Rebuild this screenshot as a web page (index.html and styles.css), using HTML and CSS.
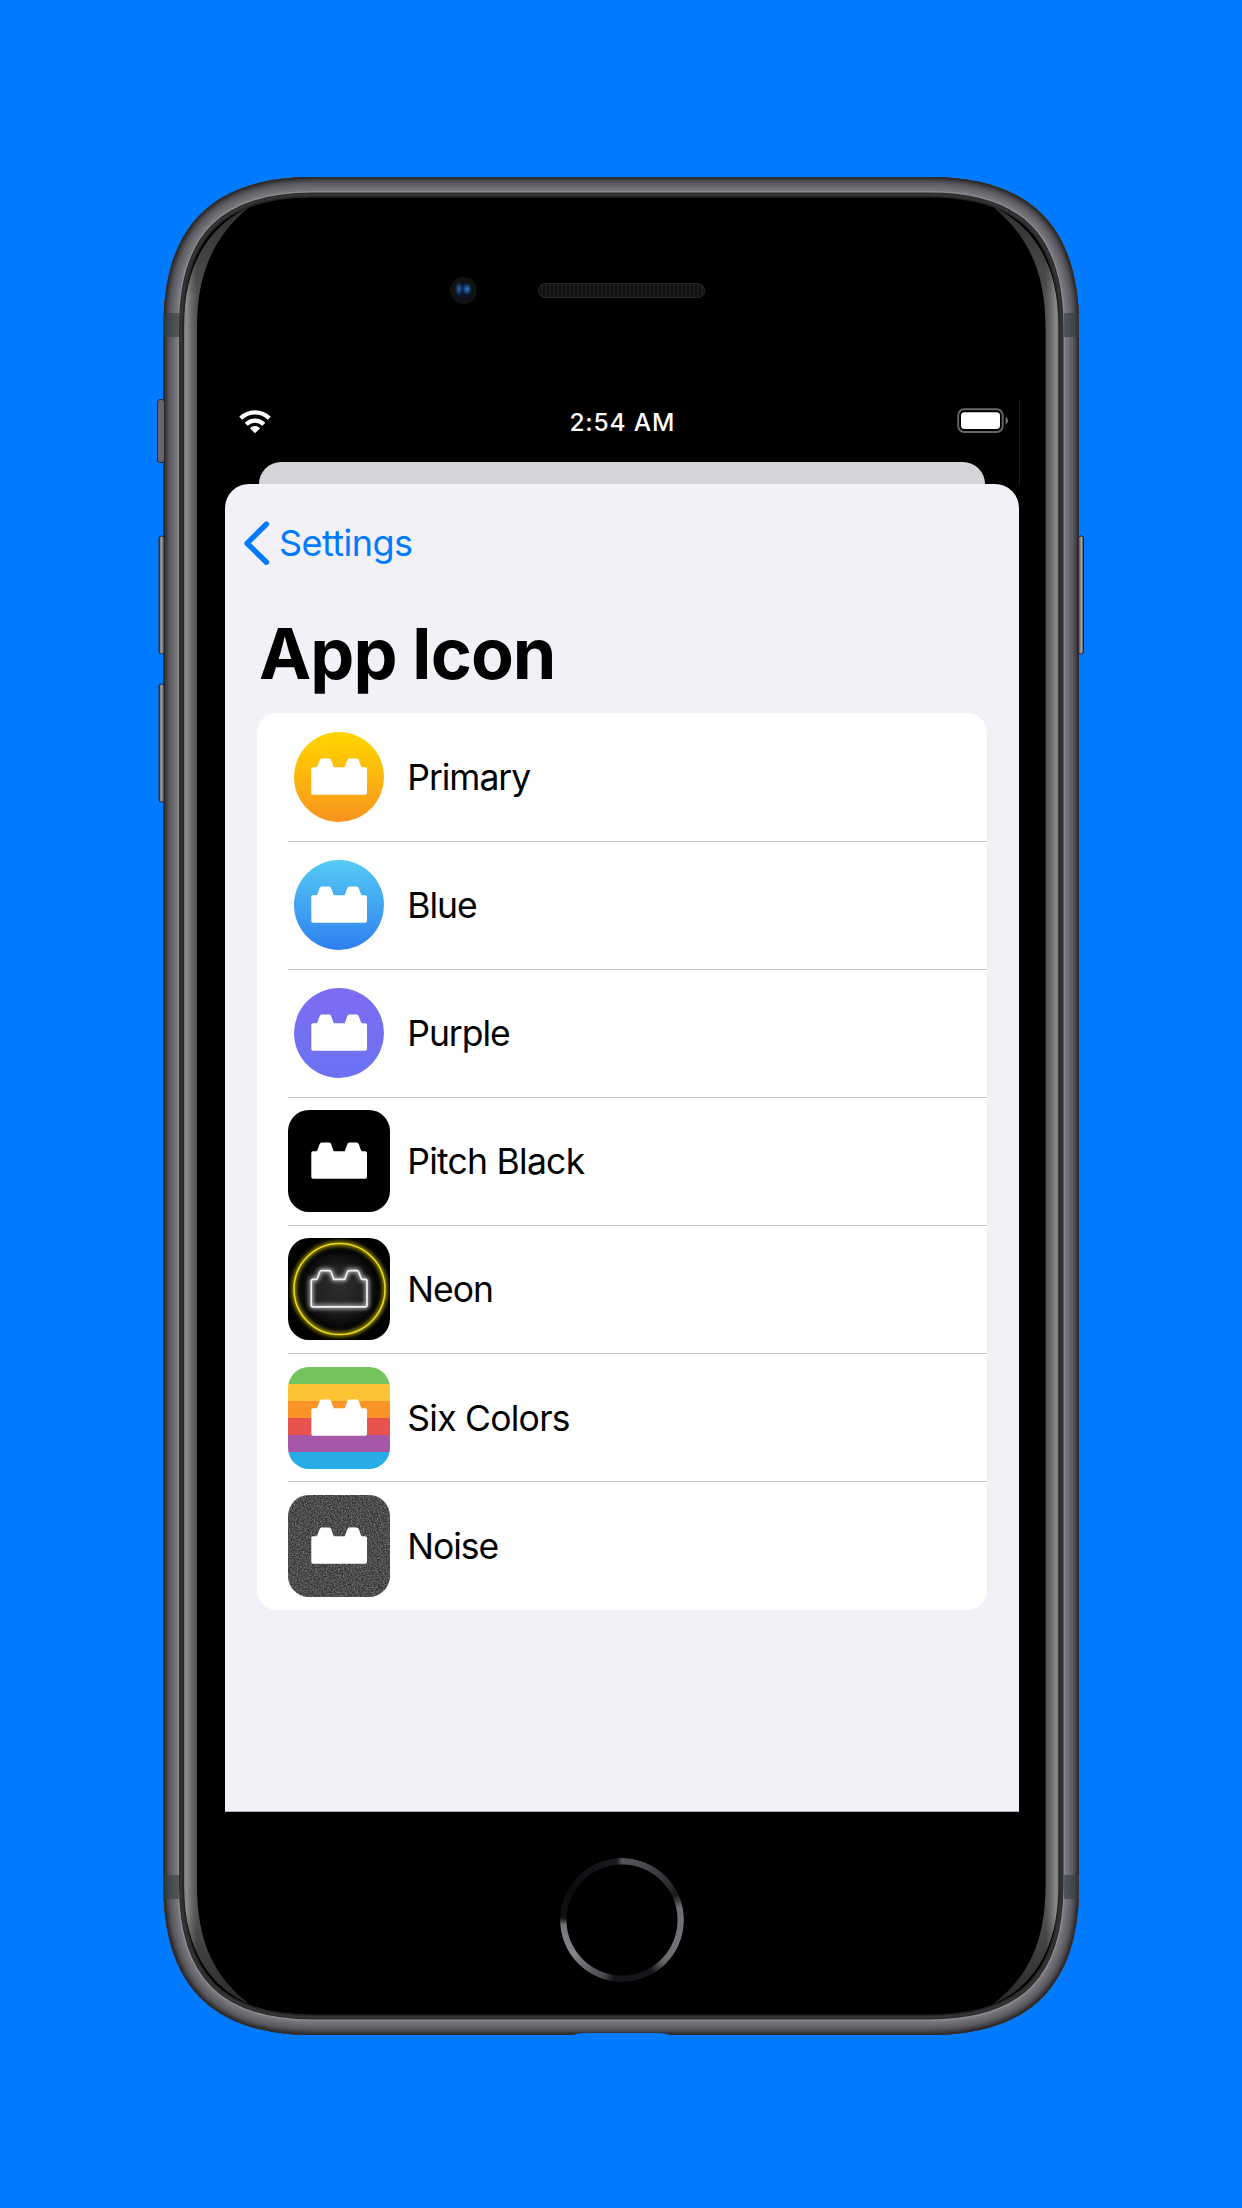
FILE: index.html
```html
<!DOCTYPE html>
<html lang="en">
<head>
<meta charset="utf-8">
<title>App Icon</title>
<link rel="stylesheet" href="styles.css">
</head>
<body>
<svg class="frame" width="1242" height="2208" viewBox="0 0 1242 2208" aria-hidden="true">
  <defs>
    <path id="body" d="M313.500 177H929C1030 177 1079 226 1079 327V1885C1079 1986 1030 2035 929 2035H313.500C212.500 2035 163.500 1986 163.500 1885V327C163.500 226 212.500 177 313.500 177Z"/>
    <clipPath id="bodyClip"><use href="#body"/></clipPath>
    <linearGradient id="shine" gradientUnits="userSpaceOnUse" x1="184" y1="0" x2="197" y2="0">
      <stop offset="0" stop-color="#777"/><stop offset=".2" stop-color="#8b8b8b"/><stop offset=".6" stop-color="#686868"/><stop offset="1" stop-color="#505050"/>
    </linearGradient>
    <linearGradient id="fade" x1="0" y1="0" x2="0" y2="1">
      <stop offset="0" stop-opacity=".4"/><stop offset=".05" stop-opacity="0"/><stop offset=".95" stop-opacity="0"/><stop offset="1" stop-opacity=".5"/>
    </linearGradient>
    <path id="edge" d="M249 207C213 225 184 258 184 327V1885C184 1954 213 1988 249 2004C216 1978 197 1945 197 1885V327C197 268 217 234 249 207Z"/>
    <linearGradient id="key" x1="0" y1="0" x2="1" y2="0">
      <stop offset="0" stop-color="#2c2b2e"/><stop offset=".4" stop-color="#aaa9ad"/><stop offset=".65" stop-color="#77757b"/><stop offset="1" stop-color="#333236"/>
    </linearGradient>
    <linearGradient id="keyR" x1="1" y1="0" x2="0" y2="0">
      <stop offset="0" stop-color="#2c2b2e"/><stop offset=".35" stop-color="#aaa9ad"/><stop offset=".65" stop-color="#77757b"/><stop offset="1" stop-color="#333236"/>
    </linearGradient>
  </defs>
  <use href="#body" fill="#000"/>
  <g clip-path="url(#bodyClip)" fill="none">
    <use href="#body" stroke="#252525" stroke-width="41"/>
    <use href="#body" stroke="#323333" stroke-width="38"/>
    <use href="#body" stroke="#2b2b2c" stroke-width="33"/>
    <use href="#body" stroke="#8b8a8f" stroke-width="31"/>
    <use href="#body" stroke="#77757c" stroke-width="28"/>
    <use href="#body" stroke="#706e75" stroke-width="24"/>
    <use href="#body" stroke="#67656c" stroke-width="20"/>
    <use href="#body" stroke="#5f5d64" stroke-width="16"/>
    <use href="#body" stroke="#545258" stroke-width="12"/>
    <use href="#body" stroke="#47464b" stroke-width="9"/>
    <use href="#body" stroke="#38373b" stroke-width="6"/>
    <use href="#body" stroke="#2b2a2e" stroke-width="3"/>
  </g>
  <g fill="#343d40" fill-opacity=".62">
    <path d="M164 313h15v24h-15zM1064 313h15v24h-15zM164 1875h15v24h-15zM1064 1875h15v24h-15z"/>
  </g>
  <g id="edgeL"><use href="#edge" fill="url(#shine)"/><use href="#edge" fill="url(#fade)"/></g>
  <use href="#edgeL" transform="matrix(-1 0 0 1 1242.500 0)"/>
  <g stroke="#252427">
    <rect x="157.500" y="399.500" width="7" height="63" rx="2.500" fill="#68666c"/>
    <rect x="159" y="536" width="5.500" height="118" rx="2.500" fill="url(#key)"/>
    <rect x="159" y="684" width="5.500" height="118" rx="2.500" fill="url(#key)"/>
    <rect x="1078" y="536" width="5.500" height="118" rx="2.500" fill="url(#keyR)"/>
  </g>
  <path d="M573 2035q5-2 12-2h73q7 0 12 2z" fill="#007aff"/>
  <path d="M1019.500 399v86" stroke="#1c1d20"/>
</svg>

<svg class="defs" width="0" height="0" aria-hidden="true">
  <defs>
    <path id="brick" d="M24.800 41.300H28.200Q29 41.300 29.300 40.500L31.600 34.200Q32.200 32.600 33.900 32.600H41.200Q42.700 32.600 43.200 34.200L45.700 41.300H56.700L59.300 34.200Q59.800 32.600 61.400 32.600H68.700Q70.200 32.600 70.800 34.200L73.100 40.500Q73.400 41.300 74.200 41.300H77.300Q79 41.300 79 43V67Q79 68.800 77.300 68.800H25Q23.300 68.800 23.300 67V43Q23.300 41.300 24.800 41.300Z"/>
    <linearGradient id="gold" x1="0" y1="0" x2="0" y2="1"><stop offset="0" stop-color="#ffd400"/><stop offset=".15" stop-color="#ffce02"/><stop offset="1" stop-color="#f8931f"/></linearGradient>
    <linearGradient id="blue" x1="0" y1="0" x2="0" y2="1"><stop offset="0" stop-color="#55cbf3"/><stop offset="1" stop-color="#2f7ff0"/></linearGradient>
    <linearGradient id="purple" x1="0" y1="0" x2="0" y2="1"><stop offset="0" stop-color="#7d6cf1"/><stop offset="1" stop-color="#6a73f2"/></linearGradient>
    <radialGradient id="haze"><stop offset="0" stop-color="#2c2c2c"/><stop offset=".5" stop-color="#222"/><stop offset="1" stop-color="#000"/></radialGradient>
    <filter id="glow" x="-30%" y="-30%" width="160%" height="160%"><feGaussianBlur stdDeviation="2"/></filter>
    <filter id="grain" x="0" y="0" width="100%" height="100%" color-interpolation-filters="sRGB">
      <feTurbulence type="fractalNoise" baseFrequency=".65" numOctaves="3" seed="4"/>
      <feColorMatrix values=".5 0 0 0 .05  .5 0 0 0 .05  .5 0 0 0 .05  0 0 0 0 1"/>
      <feComposite in2="SourceGraphic" operator="in"/>
    </filter>
  </defs>
</svg>

<main class="phone">
  <header class="bezel-top">
    <span class="camera"></span>
    <span class="speaker"></span>
  </header>

  <section class="screen">
    <div class="status">
      <svg class="wifi" width="32" height="24" viewBox="0 0 32 24"><g fill="none" stroke="#fff" stroke-width="4.300"><path d="M1.700 8.300a20.300 20.300 0 0 1 28.600 0"/><path d="M7.200 14.200a12.500 12.500 0 0 1 17.600 0"/></g><path d="M10.900 18.200a7.300 7.300 0 0 1 10.200 0L16 23.300z" fill="#fff"/></svg>
      <span class="time">2:54 AM</span>
      <svg class="battery" width="52" height="26" viewBox="0 0 52 26"><rect x="1.200" y="1.200" width="44.500" height="22.800" rx="6" fill="none" stroke="#666" stroke-width="1.900"/><rect x="4" y="4.200" width="39" height="16.800" rx="3.500" fill="#fff"/><path d="M48.700 9q2.300 1.200 2.300 3.700t-2.300 3.700z" fill="#777"/></svg>
    </div>
    <div class="sheet-back"></div>
    <div class="sheet">
      <nav class="back">
        <svg width="28" height="46" viewBox="0 0 28 46"><path d="M23.400 4.200L4 23.300l19.400 18.900" fill="none" stroke="#007aff" stroke-width="5.400" stroke-linecap="round" stroke-linejoin="round"/></svg>
        <span class="back-label">Settings</span>
      </nav>
      <h1 class="title">App Icon</h1>
      <ul class="list">
        <li class="row"><svg class="icon" viewBox="0 0 102 102"><circle cx="51" cy="51" r="45" fill="url(#gold)"/><use href="#brick" fill="#fff"/></svg><span class="label">Primary</span></li>
        <li class="row"><svg class="icon" viewBox="0 0 102 102"><circle cx="51" cy="51" r="45" fill="url(#blue)"/><use href="#brick" fill="#fff"/></svg><span class="label">Blue</span></li>
        <li class="row"><svg class="icon" viewBox="0 0 102 102"><circle cx="51" cy="51" r="45" fill="url(#purple)"/><use href="#brick" fill="#fff"/></svg><span class="label">Purple</span></li>
        <li class="row"><svg class="icon tile" viewBox="0 0 102 102"><rect width="102" height="102"/><use href="#brick" fill="#fff"/></svg><span class="label long">Pitch Black</span></li>
        <li class="row"><svg class="icon tile" viewBox="0 0 102 102"><rect width="102" height="102"/><circle cx="51" cy="51" r="42" fill="url(#haze)"/><circle cx="51.500" cy="51" r="45.500" fill="none" stroke="#b5a800" stroke-width="4" filter="url(#glow)"/><circle cx="51.500" cy="51" r="45.500" fill="none" stroke="#efdd1a" stroke-width="1.500"/><use href="#brick" fill="none" stroke="#bbb" stroke-width="4" filter="url(#glow)"/><use href="#brick" fill="none" stroke="#f2f2f2" stroke-width="1.700"/></svg><span class="label">Neon</span></li>
        <li class="row"><svg class="icon tile" viewBox="0 0 102 102"><rect width="102" height="17" fill="#74c45e"/><rect y="17" width="102" height="17" fill="#fec334"/><rect y="34" width="102" height="17" fill="#fb9427"/><rect y="51" width="102" height="17" fill="#e8534f"/><rect y="68" width="102" height="17" fill="#a657a8"/><rect y="85" width="102" height="17" fill="#27ace5"/><use href="#brick" fill="#fff"/></svg><span class="label long">Six Colors</span></li>
        <li class="row"><svg class="icon tile" viewBox="0 0 102 102"><rect width="102" height="102" fill="#494949" filter="url(#grain)"/><use href="#brick" fill="#fff"/></svg><span class="label">Noise</span></li>
      </ul>
    </div>
  </section>

  <footer class="bezel-bottom"><span class="home"></span></footer>
</main>
</body>
</html>
```
FILE: styles.css
```css
* { box-sizing: border-box; }

body {
  margin: 0;
  width: 1242px;
  height: 2208px;
  overflow: hidden;
  background: #007aff;
  font-family: Inter, "Liberation Sans", sans-serif;
  color: #000;
}

.frame { position: absolute; left: 0; top: 0; }
.defs { position: absolute; }

.phone {
  position: relative;
  width: 794px;
  margin-left: 225px;
  padding-top: 177px;
}

.bezel-top {
  display: flex;
  align-items: center;
  gap: 61px;
  height: 222px;
  padding: 5px 0 0 225px;
}
.camera {
  width: 27px;
  height: 27px;
  border-radius: 50%;
  background:
    radial-gradient(ellipse 4px 7px at 9px 12px, #2a68ad, transparent),
    radial-gradient(ellipse 5px 6px at 17px 12px, #2f7bc8, transparent),
    radial-gradient(circle at 50% 50%, #06162f 0 6px, #111214 9px);
}
.speaker {
  width: 167px;
  height: 15px;
  border: 1px solid #2c2c2c;
  border-radius: 8px;
  background: repeating-linear-gradient(90deg, #111 0 2px, #1b1b1b 2px 4px);
}

.screen {
  display: flex;
  flex-direction: column;
  height: 1413px;
}
.status {
  display: flex;
  justify-content: space-between;
  align-items: center;
  height: 63px;
  padding: 0 10.500px 16px 14px;
}
.wifi { margin-bottom: 1px; }
.battery { margin-bottom: 3px; }
.time {
  font-size: 24.500px;
  font-weight: 500;
  line-height: 30px;
  color: #fff;
  letter-spacing: .8px;
  margin: 0 0 1px 17px;
}
.sheet-back {
  height: 22px;
  margin: 0 34px;
  border-radius: 22px 22px 0 0;
  background: #d5d4d9;
}
.sheet {
  flex: 1;
  padding: 35px 32px 0;
  border-radius: 24px 24px 0 0;
  background: #f2f1f7;
  border-bottom: 1px solid #b0afb5;
}
.back {
  display: flex;
  align-items: center;
  gap: 8px;
  height: 48px;
  margin-left: -14px;
  color: #007aff;
}
.back-label { font-size: 36px; line-height: 44px; letter-spacing: -.55px; }
.title {
  margin: 45px 0 0 2px;
  font-size: 70px;
  font-weight: 700;
  line-height: 84px;
  letter-spacing: -1px;
}
.list {
  margin: 16.500px 0 0;
  padding: 0;
  list-style: none;
  width: 730px;
  height: 897px;
  border-radius: 20px;
  background: #fff;
}
.row {
  display: flex;
  align-items: center;
  gap: 17px;
  height: 128.1px;
  margin-left: 31.300px;
}
.row:first-child { padding-top: 1px; }
.row + .row { border-top: 1px solid #c4c3c8; }
.icon { width: 102px; height: 102px; flex: none; }
.tile { border-radius: 21px; }
.label {
  padding-top: 2px;
  font-size: 35.500px;
  line-height: 44px;
  letter-spacing: -1.05px;
}
.long { letter-spacing: -.75px; }

.bezel-bottom {
  display: flex;
  justify-content: center;
  padding: 46px 1px 0 0;
}
.home {
  width: 124px;
  height: 124px;
  border-radius: 50%;
  background: conic-gradient(#55545a 0deg, #4e4d53 18deg, #2a292e 55deg, #18171b 65deg, #6d6c72 78deg, #737278 115deg, #68676c 135deg, #18171b 150deg, #141317 188deg, #48474d 198deg, #85848a 235deg, #77767c 265deg, #111014 272deg, #0c0b0f 300deg, #1b1a1e 355deg, #55545a 360deg);
  -webkit-mask: radial-gradient(circle, transparent 55px, #000 56px);
  mask: radial-gradient(circle, transparent 55px, #000 56px);
}
```
